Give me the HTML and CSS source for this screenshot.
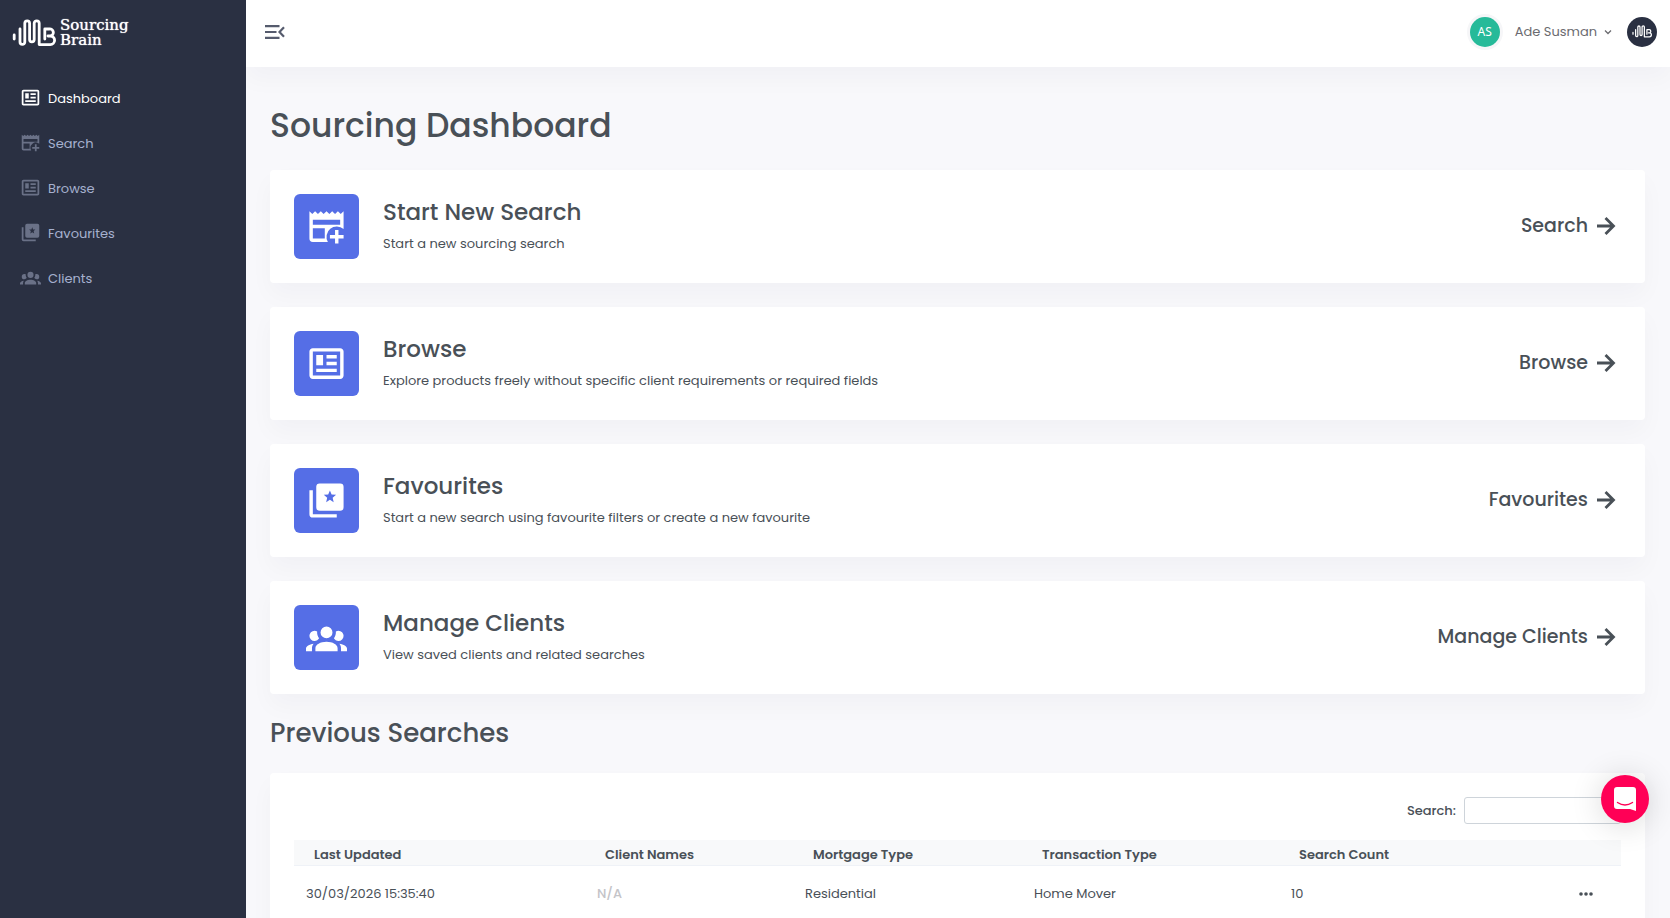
FILE: index.html
```html
<!DOCTYPE html>
<html lang="en">

<head>
  <meta charset="utf-8">
  <title>Sourcing Dashboard</title>
  <link rel="stylesheet" href="styles.css">
</head>

<body>
  <!-- icon sprite -->
  <svg class="sprite" aria-hidden="true">
    <symbol id="i-news" viewBox="0 0 24 24">
      <path d="M20 5V19H4V5H20M20 3H4C2.89 3 2 3.89 2 5V19C2 20.11 2.89 21 4 21H20C21.11 21 22 20.11 22 19V5C22 3.89 21.11 3 20 3M18 15H6V17H18V15M10 7H6V13H10V7M12 9H18V7H12V9M18 11H12V13H18V11Z" />
    </symbol>
    <symbol id="i-news-plus" viewBox="0 0 24 24">
      <path fill-rule="evenodd" d="M20.33 4.67L18.67 3L17 4.67L15.33 3L13.67 4.67L12 3L10.33 4.67L8.67 3L7 4.67L5.33 3L3.67 4.67L2 3V19A2 2 0 0 0 4 21H12.8A6 6 0 0 1 22 13.53V3ZM4 8H20V11H4ZM4 13H11V19H4Z" />
      <path d="M17 14V17H14V19H17V22H19V19H22V17H19V14Z" />
    </symbol>
    <symbol id="i-star-box" viewBox="0 0 24 24">
      <path d="M2 6H4V20H18V22H4A2 2 0 0 1 2 20Z" />
      <path fill-rule="evenodd" d="M8 2H20A2 2 0 0 1 22 4V16A2 2 0 0 1 20 18H8A2 2 0 0 1 6 16V4A2 2 0 0 1 8 2ZM14 6.1L13 8.5L10.4 8.7L12.4 10.4L11.8 13L14 11.6L16.2 13L15.6 10.4L17.6 8.7L15 8.5Z" />
    </symbol>
    <symbol id="i-group" viewBox="0 0 24 24">
      <path d="M12 5.5A3.5 3.5 0 0 1 15.5 9A3.5 3.5 0 0 1 12 12.5A3.5 3.5 0 0 1 8.5 9A3.5 3.5 0 0 1 12 5.5M5 8C5.56 8 6.08 8.15 6.53 8.42C6.38 9.85 6.8 11.27 7.66 12.38C7.16 13.34 6.16 14 5 14A3 3 0 0 1 2 11A3 3 0 0 1 5 8M19 8A3 3 0 0 1 22 11A3 3 0 0 1 19 14C17.84 14 16.84 13.34 16.34 12.38C17.2 11.27 17.62 9.85 17.47 8.42C17.92 8.15 18.44 8 19 8M5.5 18.25C5.5 16.18 8.41 14.5 12 14.5C15.59 14.5 18.5 16.18 18.5 18.25V20H5.5V18.25M0 20V18.5C0 17.11 1.89 15.94 4.45 15.6C3.86 16.28 3.5 17.22 3.5 18.25V20H0M24 20H20.5V18.25C20.5 17.22 20.14 16.28 19.55 15.6C22.11 15.94 24 17.11 24 18.5V20Z" />
    </symbol>
    <symbol id="i-arrow" viewBox="0 0 20 20">
      <path d="M1 10H17M9.5 2L17.5 10L9.5 18" fill="none" stroke="currentColor" stroke-width="2.8" />
    </symbol>
    <symbol id="i-brand" viewBox="0 0 44 28">
      <path d="M2.2 16V20M8 10V23A2.4 2.4 0 0 0 12.8 23V4.3A2.4 2.4 0 0 1 17.6 4.3V20.5A2.3 2.3 0 0 0 22.2 20.5V4.3A2.5 2.5 0 0 1 27.2 4.3V25.6H38.3A4.3 4.3 0 0 0 38.3 17H36M32.8 20V10H37.3A3.5 3.5 0 0 1 38.3 17" fill="none" stroke="currentColor" stroke-width="2.8" stroke-linecap="round" stroke-linejoin="round" />
    </symbol>
  </svg>

  <div class="layout">
    <aside class="sidebar">
      <a href="#" class="logo">
        <svg class="logo-mark"><use href="#i-brand" /></svg>
        <span class="logo-text">Sourcing<br>Brain</span>
      </a>
      <nav class="menu">
        <a href="#" class="active"><svg><use href="#i-news" /></svg>Dashboard</a>
        <a href="#"><svg><use href="#i-news-plus" /></svg>Search</a>
        <a href="#"><svg><use href="#i-news" /></svg>Browse</a>
        <a href="#"><svg><use href="#i-star-box" /></svg>Favourites</a>
        <a href="#"><svg><use href="#i-group" /></svg>Clients</a>
      </nav>
    </aside>

    <div class="main">
      <header class="topbar">
        <button type="button" class="menu-toggle" aria-label="Toggle menu">
          <svg viewBox="0 0 20 14">
            <path d="M0 1.2H14.5M0 7H11.5M0 12.8H14.5M19 2.2L14.5 7L19 11.8" fill="none" stroke="currentColor" stroke-width="2.2" />
          </svg>
        </button>
        <div class="user">
          <span class="avatar">AS</span>
          <button type="button" class="user-btn">Ade Susman
            <svg viewBox="0 0 8 6"><path d="M1 1.5L4 4.5L7 1.5" fill="none" stroke="currentColor" stroke-width="1.3" /></svg>
          </button>
          <span class="brand-badge"><svg><use href="#i-brand" /></svg></span>
        </div>
      </header>

      <main class="content">
        <h1>Sourcing Dashboard</h1>

        <section class="card">
          <span class="card-icon"><svg><use href="#i-news-plus" /></svg></span>
          <div class="card-body">
            <h3>Start New Search</h3>
            <p>Start a new sourcing search</p>
          </div>
          <a href="#" class="card-link">Search <svg><use href="#i-arrow" /></svg></a>
        </section>

        <section class="card">
          <span class="card-icon"><svg><use href="#i-news" /></svg></span>
          <div class="card-body">
            <h3>Browse</h3>
            <p>Explore products freely without specific client requirements or required fields</p>
          </div>
          <a href="#" class="card-link">Browse <svg><use href="#i-arrow" /></svg></a>
        </section>

        <section class="card">
          <span class="card-icon"><svg><use href="#i-star-box" /></svg></span>
          <div class="card-body">
            <h3>Favourites</h3>
            <p>Start a new search using favourite filters or create a new favourite</p>
          </div>
          <a href="#" class="card-link">Favourites <svg><use href="#i-arrow" /></svg></a>
        </section>

        <section class="card">
          <span class="card-icon"><svg><use href="#i-group" /></svg></span>
          <div class="card-body">
            <h3>Manage Clients</h3>
            <p>View saved clients and related searches</p>
          </div>
          <a href="#" class="card-link">Manage Clients <svg><use href="#i-arrow" /></svg></a>
        </section>

        <h2>Previous Searches</h2>

        <section class="table-card">
          <div class="filter">
            <label for="filter">Search:</label>
            <input type="search" id="filter">
          </div>
          <table>
            <thead>
              <tr>
                <th class="col-date">Last Updated</th>
                <th class="col-client">Client Names</th>
                <th class="col-mortgage">Mortgage Type</th>
                <th class="col-transaction">Transaction Type</th>
                <th>Search Count</th>
                <th class="col-actions"></th>
              </tr>
            </thead>
            <tbody>
              <tr>
                <td>30/03/2026 15:35:40</td>
                <td class="muted">N/A</td>
                <td>Residential</td>
                <td>Home Mover</td>
                <td>10</td>
                <td>
                  <button type="button" class="more" aria-label="More">
                    <svg viewBox="0 0 14 4"><circle cx="2" cy="2" r="1.8" /><circle cx="7" cy="2" r="1.8" /><circle cx="12" cy="2" r="1.8" /></svg>
                  </button>
                </td>
              </tr>
            </tbody>
          </table>
        </section>
      </main>
    </div>
  </div>

  <button type="button" class="chat" aria-label="Open chat">
    <svg viewBox="0 0 22 24">
      <path d="M3 0H19A3 3 0 0 1 22 3V24L16 22H3A3 3 0 0 1 0 19V3A3 3 0 0 1 3 0Z" fill="#fff" />
      <path d="M3.5 15.5Q11 20.5 18.5 15.5" fill="none" stroke="#ff0056" stroke-width="1.4" stroke-linecap="round" />
    </svg>
  </button>
</body>

</html>
```
FILE: styles.css
```css
* {
  box-sizing: border-box;
}

body {
  margin: 0;
  height: 100vh;
  overflow: hidden;
  font-family: Poppins, Inter, sans-serif;
  font-size: 13px;
  line-height: 20px;
  color: #495057;
  background: #f8f8fb;
}

a {
  color: inherit;
  text-decoration: none;
}

button {
  padding: 0;
  border: 0;
  background: none;
  color: inherit;
  font: inherit;
  cursor: pointer;
}

h1,
h2,
h3,
p {
  margin: 0;
  font-weight: 500;
}

svg {
  display: block;
  flex: none;
  fill: currentColor;
}

.sprite {
  position: absolute;
  width: 0;
  height: 0;
}

.layout {
  display: flex;
  height: 100vh;
}

/* sidebar */
.sidebar {
  flex: none;
  width: 246px;
  background: #2a3042;
  position: relative;
}

.logo {
  display: flex;
  align-items: center;
  gap: 4px;
  height: 67px;
  padding: 0 12px 2px;
  color: #fff;
}

.logo-mark {
  width: 44px;
  height: 28px;
}

.logo-text {
  font-family: "DejaVu Serif", serif;
  font-size: 15px;
  line-height: 15px;
  text-shadow: 0 0 1px #fff;
}

.menu {
  padding-top: 9px;
}

.menu a {
  display: flex;
  align-items: center;
  gap: 7px;
  height: 45px;
  padding-left: 20px;
  color: #a6b0cf;
}

.menu svg {
  width: 21px;
  height: 21px;
  margin-bottom: 2px;
  color: #6a7187;
}

.menu .active,
.menu .active svg {
  color: #fff;
}

/* top bar */
.main {
  flex: 1;
  min-width: 0;
}

.topbar {
  display: flex;
  align-items: center;
  justify-content: space-between;
  height: 67px;
  padding: 0 13px 4px 19px;
  background: #fff;
  box-shadow: 0 12px 24px rgba(18, 38, 63, 0.03);
}

.menu-toggle {
  color: #555b6d;
}

.menu-toggle svg {
  width: 20px;
  height: 14px;
}

.user {
  display: flex;
  align-items: center;
  gap: 15px;
}

.avatar,
.brand-badge {
  display: flex;
  align-items: center;
  justify-content: center;
  width: 30px;
  height: 30px;
  border-radius: 50%;
  color: #fff;
}

.avatar {
  background: #26ba99;
  font-family: "Noto Sans", sans-serif;
  font-size: 12px;
  box-shadow: 0 0 0 3px #f6f6f8;
}

.brand-badge {
  background: #2a3042;
}

.brand-badge svg {
  width: 20px;
  height: 13px;
}

.user-btn {
  display: flex;
  align-items: center;
  gap: 7px;
  color: #6b6b70;
}

.user-btn svg {
  width: 8px;
  height: 6px;
}

/* content */
.content {
  padding: 37px 25px 0 24px;
}

h1 {
  margin-bottom: 22px;
  font-size: 33px;
  line-height: 44px;
}

h2 {
  margin-bottom: 25px;
  font-size: 26px;
  line-height: 30px;
}

h3 {
  margin-bottom: 9px;
  font-size: 23px;
  line-height: 26px;
}

.card {
  display: flex;
  align-items: center;
  gap: 24px;
  margin-bottom: 24px;
  padding: 24px 29px 24px 24px;
  background: #fff;
  border-radius: 4px;
  box-shadow: 0 12px 24px rgba(18, 38, 63, 0.03);
}

.card-icon {
  display: flex;
  align-items: center;
  justify-content: center;
  width: 65px;
  height: 65px;
  border-radius: 6px;
  background: #556ee6;
  color: #fff;
}

.card-icon svg {
  width: 41px;
  height: 41px;
}

.card-body {
  flex: 1;
}

.card-body p {
  font-weight: 400;
}

.card-link {
  display: flex;
  align-items: center;
  gap: 8px;
  padding-bottom: 2px;
  font-size: 19px;
  font-weight: 500;
}

.card-link svg {
  width: 20px;
  height: 20px;
}

/* previous searches */
.table-card {
  padding: 24px;
  background: #fff;
  border-radius: 4px;
  box-shadow: 0 12px 24px rgba(18, 38, 63, 0.03);
}

.filter {
  display: flex;
  align-items: center;
  justify-content: flex-end;
  gap: 8px;
  margin-bottom: 16px;
  font-weight: 500;
}

.filter input {
  width: 157px;
  height: 27px;
  border: 1px solid #ced4da;
  border-radius: 3px;
  background: #fff;
}

table {
  width: 100%;
  table-layout: fixed;
  border-collapse: collapse;
}

th {
  padding: 5px 20px 0;
  text-align: left;
  font-weight: 600;
  background: #f8f9fa;
  border-bottom: 1px solid #eff2f7;
}

td {
  height: 56px;
  padding: 0 12px;
}

.col-date {
  width: 291px;
}

.col-client {
  width: 208px;
}

.col-mortgage {
  width: 229px;
}

.col-transaction {
  width: 257px;
}

.col-actions {
  width: 54px;
}

.muted {
  color: #c4c4c8;
  font-weight: 500;
}

.more {
  display: block;
}

.more svg {
  width: 14px;
  height: 4px;
}

/* chat launcher */
.chat {
  position: fixed;
  right: 21px;
  bottom: 95px;
  display: flex;
  align-items: center;
  justify-content: center;
  width: 48px;
  height: 48px;
  border-radius: 50%;
  background: #ff0056;
  box-shadow: 0 2px 32px rgba(0, 0, 0, 0.16);
}

.chat svg {
  width: 22px;
  height: 24px;
}
```
